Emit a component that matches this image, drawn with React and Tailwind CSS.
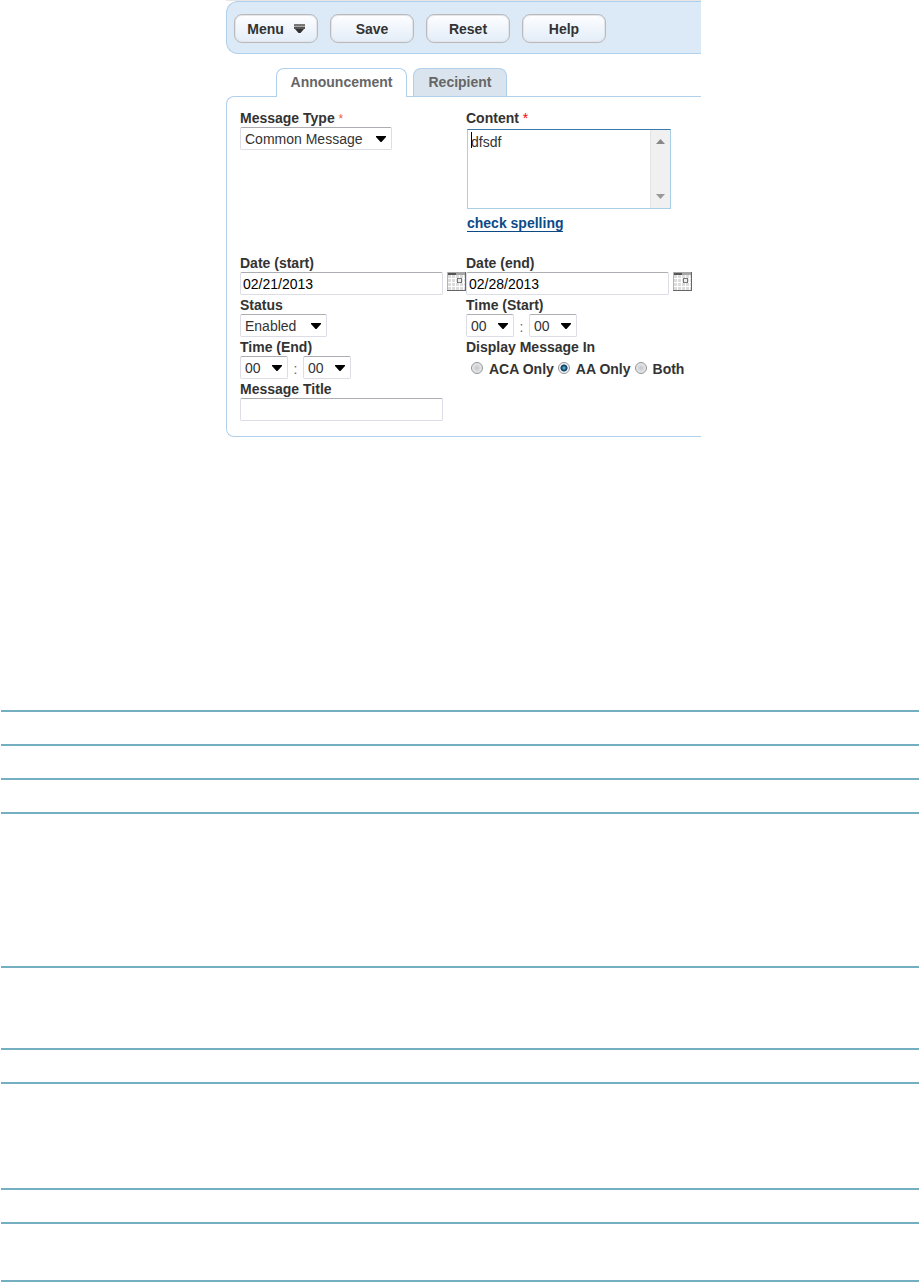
import React from "react";

const FIELD =
  "block h-[23px] border border-[#dcdde6] border-t-[#abadb3] bg-white text-sm text-[#333] outline-none";

function ToolButton({ children }) {
  return (
    <button
      type="button"
      className="flex h-[29px] w-[84px] items-center justify-center gap-[10px] rounded-lg border border-[#b9b9bb] bg-linear-to-b from-[#fdfeff] to-[#e3edf8] text-sm font-bold text-[#333] inset-ring inset-ring-[#e4e6ea]"
    >
      {children}
    </button>
  );
}

function Label({ htmlFor, children }) {
  return (
    <label htmlFor={htmlFor} className="block h-[18px] text-sm leading-[18px] font-bold">
      {children}
    </label>
  );
}

function Select({ id, label, className, options }) {
  return (
    <div className={`relative ${className}`}>
      <select id={id} aria-label={label} className={`${FIELD} w-full appearance-none rounded-xs pl-1 leading-5`}>
        {options.map((o) => (
          <option key={o}>{o}</option>
        ))}
      </select>
      <svg
        className="pointer-events-none absolute top-[9px] right-[6px]"
        width="10"
        height="6"
        viewBox="0 0 10 6"
        aria-hidden="true"
      >
        <path d="M0 0h10v1L5.5 6h-1L0 1z" fill="#000" />
      </svg>
    </div>
  );
}

function TimePicker({ id, name }) {
  return (
    <div className="flex">
      <Select id={id} className="w-12" options={["00", "01", "02"]} />
      <span className="h-[23px] w-[15px] pt-[3px] text-center text-sm leading-5 text-[#666]">:</span>
      <Select label={`${name} minutes`} className="w-12" options={["00", "15", "30", "45"]} />
    </div>
  );
}

function CalendarIcon() {
  return (
    <svg width="19" height="19" viewBox="0 0 19 19" shapeRendering="crispEdges" aria-hidden="true">
      <rect width="19" height="19" fill="#dcdcdc" />
      <path d="M4.5 3v15M8.5 3v15M12.5 3v15M16.5 3v15M1 6.5h17M1 10.5h17M1 14.5h17" stroke="#fff" />
      <path d="M0 0h19v3H0z" fill="#a6a6a6" />
      <path d="M1 1h8v2H1z" fill="#555" />
      <path d="M.5 0v19" stroke="#b5b5b5" />
      <path d="M18.5 0v19M0 18.5h19" stroke="#666" />
      <rect x="10.5" y="6.5" width="4" height="4" fill="#eee" stroke="#777" />
    </svg>
  );
}

function DateField({ id, label, value }) {
  return (
    <div>
      <Label htmlFor={id}>{label}</Label>
      <div className="flex items-start gap-1">
        <input id={id} type="text" defaultValue={value} className={`${FIELD} w-[203px] rounded-xs px-0.5 text-black`} />
        <button type="button" aria-label={`Pick ${label}`}>
          <CalendarIcon />
        </button>
      </div>
    </div>
  );
}

function Radio({ label, checked }) {
  return (
    <label className="flex items-center gap-[6px]">
      <input
        type="radio"
        name="display"
        defaultChecked={checked}
        className="mb-[3px] size-[12px] appearance-none rounded-full border border-[#909396] bg-[radial-gradient(circle,#c4c6c8_0%,#e3e4e5_60%,#fff_100%)] checked:bg-[radial-gradient(circle,#7fd0f2_0%,#16547c_30%,#123c5c_45%,#f4f6f7_55%)]"
      />
      {label}
    </label>
  );
}

const RULE_SPACES = ["h-8", "h-8", "h-8", "h-[152px]", "h-20", "h-8", "h-[104px]", "h-8", "h-14", "h-0"];

export default function App() {
  return (
    <main className="bg-white font-['Liberation_Sans',Arial,sans-serif] text-[#333]">
      <div className="mx-auto w-[482px] pl-[7px]">
        <div className="border-t border-[#e6e6e6]">
          <div className="flex gap-3 rounded-l-xl border border-r-0 border-[#b0d0ec] bg-[#dce9f6] pt-3 pb-[10px] pl-[7px]">
            <ToolButton>
              Menu
              <svg width="11" height="10" viewBox="0 0 11 10" aria-hidden="true">
                <path d="M0 0h11v2H0z" fill="#777" />
                <path d="M0 2h11v1H0z" fill="#aaa" />
                <path d="M0 3h11v2H0z" fill="#555" />
                <path d="M1 5h9L6.500 9h-2z" fill="#333" />
              </svg>
            </ToolButton>
            <ToolButton>Save</ToolButton>
            <ToolButton>Reset</ToolButton>
            <ToolButton>Help</ToolButton>
          </div>
        </div>

        <div role="tablist" className="mt-[14px] flex h-7 gap-[6px] pl-[50px] text-sm font-bold text-[#666]">
          <button
            type="button"
            role="tab"
            aria-selected="true"
            className="relative h-[29px] w-[131px] rounded-t-lg border border-b-0 border-[#b0d0ec] bg-white pb-0.5"
          >
            Announcement
          </button>
          <button
            type="button"
            role="tab"
            aria-selected="false"
            className="h-7 w-[94px] rounded-t-lg border border-b-0 border-[#b0d0ec] bg-[#dae4ee] pb-px"
          >
            Recipient
          </button>
        </div>

        <form className="rounded-l-lg border border-r-0 border-[#b0d0ec] pt-3 pb-[15px] pl-[13px]">
          <div className="grid grid-cols-[226px_1fr]">
            <div>
              <Label htmlFor="type">
                Message Type <span className="text-xs font-normal text-[#e8604a]">*</span>
              </Label>
              <Select id="type" className="w-[152px]" options={["Common Message", "Alert"]} />
            </div>
            <div className="h-[145px]">
              <Label htmlFor="content">
                Content <span className="font-normal text-[#f00]">*</span>
              </Label>
              <div className="relative mt-0.5 ml-px flex h-20 w-[204px] border border-[#a9cfe6] border-t-[#3d7bad]">
                <textarea
                  id="content"
                  defaultValue="dfsdf"
                  className="flex-1 resize-none overflow-hidden px-[3px] py-1 text-sm leading-4 outline-none"
                />
                <span className="absolute top-0.5 left-[3px] h-4 w-px bg-black" />
                <div className="flex w-5 flex-col items-center justify-between border-l border-[#e3e3e3] bg-[#f0f0f0] py-[9px]">
                  <svg width="9" height="5" viewBox="0 0 9 5" aria-hidden="true">
                    <path d="M4.500 0L9 5H0z" fill="#888" />
                  </svg>
                  <svg width="9" height="5" viewBox="0 0 9 5" aria-hidden="true">
                    <path d="M0 0h9L4.500 5z" fill="#999" />
                  </svg>
                </div>
              </div>
              <a
                href="#spelling"
                className="mt-[6px] ml-px inline-block border-b border-[#0c4a87] text-sm leading-4 font-bold text-[#0c4a87]"
              >
                check spelling
              </a>
            </div>
          </div>

          <div className="grid grid-cols-[226px_1fr] gap-y-px">
            <DateField id="start" label="Date (start)" value="02/21/2013" />
            <DateField id="end" label="Date (end)" value="02/28/2013" />
            <div>
              <Label htmlFor="status">Status</Label>
              <Select id="status" className="w-[87px]" options={["Enabled", "Disabled"]} />
            </div>
            <div>
              <Label htmlFor="time-start">Time (Start)</Label>
              <TimePicker id="time-start" name="Start" />
            </div>
            <div>
              <Label htmlFor="time-end">Time (End)</Label>
              <TimePicker id="time-end" name="End" />
            </div>
            <fieldset>
              <legend className="h-[18px] text-sm leading-[18px] font-bold">Display Message In</legend>
              <div className="flex h-[23px] gap-1 pt-[3px] pl-[5px] text-sm leading-5 font-bold">
                <Radio label="ACA Only" />
                <Radio label="AA Only" checked />
                <Radio label="Both" />
              </div>
            </fieldset>
            <div>
              <Label htmlFor="title">Message Title</Label>
              <input id="title" type="text" className={`${FIELD} w-[203px] rounded-xs px-0.5`} />
            </div>
          </div>
        </form>
      </div>

      <div className="mt-[273px] px-px">
        {RULE_SPACES.map((space, i) => (
          <div key={i} className={`box-content border-t-2 border-[#74aec1] ${space}`} />
        ))}
      </div>
    </main>
  );
}
